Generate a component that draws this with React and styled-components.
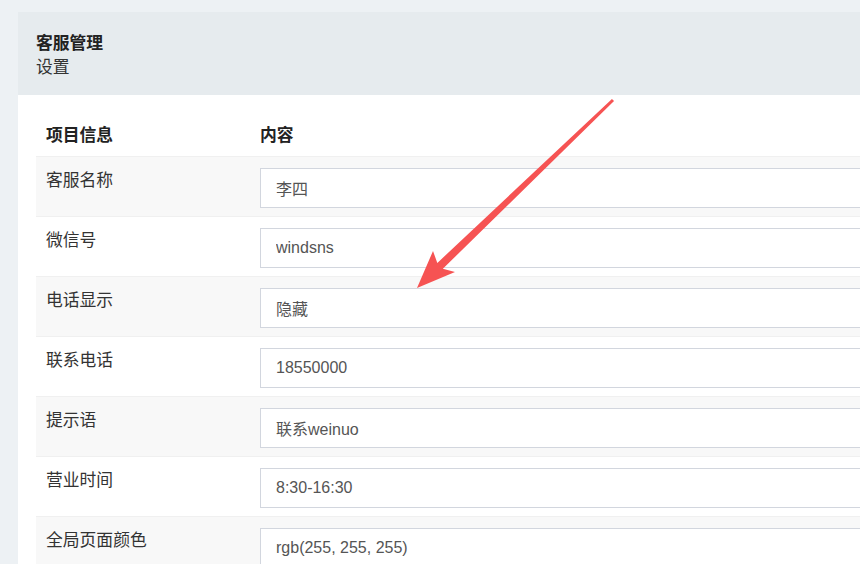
import React from 'react'
import styled, { createGlobalStyle } from 'styled-components'

const GlobalStyle = createGlobalStyle`
  html, body {
    margin: 0;
    padding: 0;
    background: #edf1f4;
    overflow: hidden;
    font-family: "Liberation Sans", "Noto Sans CJK SC", sans-serif;
    color: #333;
  }
`

const rows = [
  { label: '客服名称', value: '李四' },
  { label: '微信号', value: 'windsns' },
  { label: '电话显示', value: '隐藏' },
  { label: '联系电话', value: '18550000' },
  { label: '提示语', value: '联系weinuo' },
  { label: '营业时间', value: '8:30-16:30' },
  { label: '全局页面颜色', value: 'rgb(255, 255, 255)' },
]

const App = () => {
  return <Page>
    <GlobalStyle />
    <Card>
      <CardHeader>
        <Title>客服管理</Title>
        <SubTitle>设置</SubTitle>
      </CardHeader>
      <CardBody>
        <Table>
          <HeadRow>
            <HeadCell>项目信息</HeadCell>
            <HeadCell>内容</HeadCell>
          </HeadRow>
          {rows.map((r, i) => (
            <Row key={r.label} striped={i % 2 === 0}>
              <Label>{r.label}</Label>
              <Field>
                <Input readOnly value={r.value} />
              </Field>
            </Row>
          ))}
        </Table>
      </CardBody>
    </Card>

    {/* annotation arrow */}
    <Arrow width="860" height="564" viewBox="0 0 860 564">
      <polygon
        points="611.96,98.92 437.33,262.96 433,251 417,288 455,272 442.87,268.74 614.04,101.08"
        fill="#f65353"
      />
    </Arrow>
  </Page>
}

const Page = styled.div`
  position: relative;
  width: 860px;
  height: 564px;
  overflow: hidden;
  padding: 12px 0 0 18px;
  box-sizing: border-box;
`

const Card = styled.section`
  width: 1100px;
  background: #fff;
`

const CardHeader = styled.div`
  background: #e6ebee;
  padding: 20px 18px 0;
  height: 83px;
  box-sizing: border-box;
`

const Title = styled.div`
  font-size: 16.8px;
  font-weight: bold;
  line-height: 24px;
  color: #222;
`

const SubTitle = styled.div`
  font-size: 16.8px;
  line-height: 24px;
  color: #333;
`

const CardBody = styled.div`
  padding: 18px 18px 0;
`

const Table = styled.div`
  display: flex;
  flex-direction: column;
`

const HeadRow = styled.div`
  display: grid;
  grid-template-columns: 214px 1fr;
  height: 43px;
  align-items: center;
`

const HeadCell = styled.div`
  padding: 2px 10px 0;
  font-size: 16.8px;
  font-weight: bold;
  color: #222;
  line-height: 24px;
`

const Row = styled.div`
  display: grid;
  grid-template-columns: 214px 1fr;
  height: 60px;
  box-sizing: border-box;
  border-top: 1px solid #f0f0f0;
  background: ${p => (p.striped ? '#f8f8f8' : '#fff')};
`

const Label = styled.div`
  padding: 12px 10px 0;
  font-size: 16.8px;
  line-height: 24px;
  color: #333;
`

const Field = styled.div`
  padding: 11px 10px 0;
`

const Input = styled.input`
  display: block;
  width: 100%;
  height: 40px;
  box-sizing: border-box;
  border: 1px solid #d2d6de;
  background: #fff;
  padding: 0 15px;
  font-family: "Liberation Sans", "Noto Sans CJK SC", sans-serif;
  font-size: 16px;
  color: #555;
  outline: none;
`

const Arrow = styled.svg`
  position: absolute;
  left: 0;
  top: 0;
  pointer-events: none;
`

export default App
